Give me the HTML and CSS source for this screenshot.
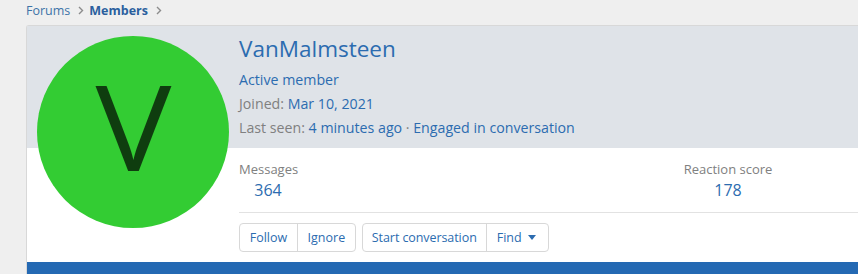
FILE: index.html
```html
<!DOCTYPE html>
<html lang="en">
<head>
<meta charset="utf-8">
<title>VanMalmsteen</title>
<link rel="stylesheet" href="styles.css">
</head>
<body>
<nav class="crumbs">
  <a class="crumb" href="#">Forums</a>
  <svg class="chev" width="6" height="9" viewBox="0 0 6 9"><path d="M1 1l3.5 3.5L1 8" fill="none" stroke="#8c8c8c" stroke-width="1.4"/></svg>
  <a class="crumb crumb-current" href="#">Members</a>
  <svg class="chev" width="6" height="9" viewBox="0 0 6 9"><path d="M1 1l3.5 3.5L1 8" fill="none" stroke="#8c8c8c" stroke-width="1.4"/></svg>
</nav>
<section class="block">
  <div class="avatar"><span class="avatar-letter">V</span></div>
  <div class="header">
    <h1 class="name">VanMalmsteen</h1>
    <div class="line"><a class="link" href="#">Active member</a></div>
    <div class="line"><span class="muted">Joined:</span> <a class="link" href="#">Mar 10, 2021</a></div>
    <div class="line"><span class="muted">Last seen:</span> <a class="link" href="#">4 minutes ago</a> <span class="muted">&middot;</span> <a class="link" href="#">Engaged in conversation</a></div>
  </div>
  <div class="body">
    <div class="stats">
      <dl class="stat stat-msg">
        <dt class="stat-label">Messages</dt>
        <dd class="stat-value">364</dd>
      </dl>
      <dl class="stat stat-react">
        <dt class="stat-label">Reaction score</dt>
        <dd class="stat-value">178</dd>
      </dl>
    </div>
    <div class="actions">
      <div class="btn-group">
        <a class="btn btn-narrow" href="#">Follow</a>
        <a class="btn btn-narrow" href="#">Ignore</a>
      </div>
      <div class="btn-group">
        <a class="btn btn-tight" href="#">Start conversation</a>
        <a class="btn" href="#">Find <span class="caret"></span></a>
      </div>
    </div>
  </div>
  <div class="bar"></div>
</section>
</body>
</html>
```
FILE: styles.css
```css
html, body {
  margin: 0;
  padding: 0;
}
body {
  background: #efefef;
  font-family: "Open Sans", "Noto Sans", sans-serif;
  color: #141414;
  overflow: hidden;
  height: 274px;
}
a { text-decoration: none; }

.crumbs {
  height: 21px;
  margin-bottom: 4px;
  display: flex;
  align-items: center;
  padding-left: 26px;
  font-size: 12.5px;
  line-height: 20px;
}
.crumb { color: #3c73a8; }
.crumb-current { font-weight: 700; color: #2a5f9e; }
.chev {
  display: block;
  margin: 0 5px 0 8px;
}

.block {
  position: relative;
  margin-left: 26px;
  background: #fff;
  border: 1px solid #d8d8d8;
  border-right: none;
  border-bottom: none;
  border-radius: 3px 0 0 0;
}
.avatar {
  position: absolute;
  left: 10px;
  top: 10px;
  width: 192px;
  height: 192px;
  border-radius: 50%;
  background: #33cc33;
  display: flex;
  align-items: center;
  justify-content: center;
}
.avatar-letter {
  font-family: "Open Sans", sans-serif;
  font-size: 119px;
  line-height: 1;
  color: #0f3d0f;
  margin-top: -14px;
  transform: scaleX(1.07);
}
.header {
  background: #dfe3e8;
  height: 122px;
  padding-left: 212px;
  box-sizing: border-box;
  padding-top: 8px;
}
.name {
  margin: 0;
  font-weight: 400;
  font-size: 22.5px;
  line-height: 30px;
  color: #2c6cb0;
  height: 34px;
}
.line {
  font-size: 14.2px;
  line-height: 24px;
}
.link { color: #2c6cb0; }
.muted { color: #808080; }

.body {
  padding-left: 212px;
}
.stats {
  display: flex;
  padding-top: 12px;
  height: 52px;
  border-bottom: 1px solid #e2e2e2;
}
.stat {
  margin: 0;
  text-align: center;
}
.stat-msg { width: 58px; }
.stat-react { width: 120px; margin-left: 371px; }
.stat-label {
  font-size: 13px;
  line-height: 19px;
  color: #808080;
  white-space: nowrap;
}
.stat-value {
  margin: 0;
  font-size: 16px;
  line-height: 22px;
  color: #2c6cb0;
}
.actions {
  display: flex;
  gap: 6px;
  padding-top: 10px;
  padding-bottom: 10px;
  height: 49px;
  box-sizing: border-box;
}
.btn-group {
  display: flex;
  border: 1px solid #d8d8d8;
  border-radius: 4px;
  height: 29px;
  box-sizing: border-box;
}
.btn {
  display: flex;
  align-items: center;
  padding: 0 10px;
  font-size: 12.5px;
  color: #2c6cb0;
}
.btn-narrow { padding: 0 9.7px; }
.btn-tight { padding: 0 9px; letter-spacing: -0.08px; }
.btn + .btn { border-left: 1px solid #d8d8d8; }
.caret {
  display: inline-block;
  width: 0;
  height: 0;
  margin-left: 6px;
  margin-right: 2px;
  border-left: 4px solid transparent;
  border-right: 4px solid transparent;
  border-top: 5px solid #2c6cb0;
}
.bar {
  height: 12px;
  background: #2469b3;
}
```
